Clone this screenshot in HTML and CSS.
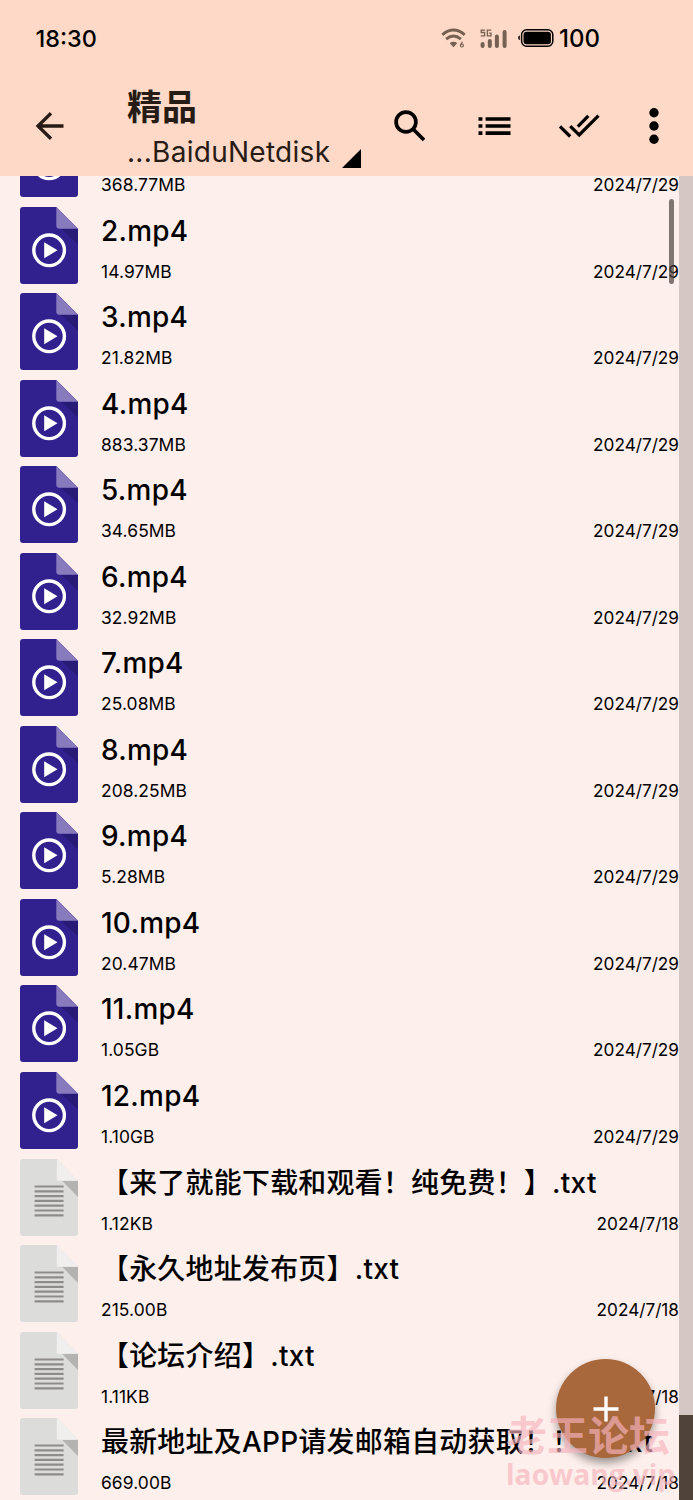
FILE: index.html
```html
<!DOCTYPE html>
<html lang="zh-CN">
    <head>
        <meta charset="UTF-8">
        <meta name="viewport" content="width=device-width, initial-scale=1.0">
        <title>精品</title>
        <link rel="stylesheet" href="styles.css">
    </head>

    <body>
        <!-- shared file icons -->
        <svg class="symbols">
            <symbol id="video" viewBox="0 0 58 77">
                <path d="M3 0H36.3L58 21.7V74a3 3 0 0 1-3 3H3a3 3 0 0 1-3-3V3a3 3 0 0 1 3-3z" fill="#30218f"/>
                <path d="M41 21.7H58V37.5z" fill="#281b78"/>
                <path d="M36.3 0L58 21.7H39.3a3 3 0 0 1-3-3z" fill="#887bbd"/>
                <circle cx="29.1" cy="43.3" r="15.3" fill="none" stroke="#fff" stroke-width="3.4"/>
                <path d="M24.2 35.3L37.5 43.3L24.2 51.3z" fill="#fff"/>
            </symbol>
            <symbol id="text" viewBox="0 0 58 77">
                <path d="M3 0H36.8L58 21.7V74a3 3 0 0 1-3 3H3a3 3 0 0 1-3-3V3a3 3 0 0 1 3-3z" fill="#dcdcdb"/>
                <path d="M42 21.7H58V38z" fill="#b4b3b2"/>
                <path d="M36.8 0L58 21.7H36.8z" fill="#f1efed"/>
                <path d="M14.6 27.5h29M14.6 32.3h29M14.6 37.1h29M14.6 41.9h29M14.6 46.7h29M14.6 51.5h29M14.6 56.3h29" stroke="#8e8c8b" stroke-width="2.2"/>
            </symbol>
        </svg>

        <div class="screen">
            <header class="header">
                <div class="status-bar">
                    <span class="time">18:30</span>
                    <svg class="wifi" width="26" height="22" viewBox="0 0 26 22" fill="none" stroke="#756052" stroke-width="2.9">
                        <path d="M1.3 6.8Q12.5-2.6 23.7 6.8"/>
                        <path d="M5.1 11.2Q12.5 5 19.9 11.2"/>
                        <path d="M8.7 15.3Q12.5 12.4 16.3 15.3L12.5 19.2z" fill="#756052" stroke="none"/>
                        <path d="M21.5 13.8L19.5 16.8" stroke-width="1.2"/>
                        <circle cx="20.9" cy="17.5" r="1.5" stroke-width="1.2"/>
                    </svg>
                    <svg class="signal" width="27" height="20" viewBox="0 0 27 20" fill="none" stroke="#756052">
                        <path d="M5.2 1.2H1.2V3.5H4.6V6.8H.8M11.3 1.2H7.4V6.8H11V4.2H9.2" stroke-width="1.3"/>
                        <path d="M2.6 15v2M9.8 11.9v5.1M16.9 7.6v9.4M24.6 3v14" stroke-width="4" stroke-linecap="round"/>
                    </svg>
                    <svg class="battery" width="36" height="19" viewBox="0 0 36 19">
                        <path d="M1.8 6.5Q.2 6.5 .2 8.8T1.8 11.1z" fill="#000"/>
                        <rect x="3.6" y=".8" width="31.2" height="16.4" rx="5" fill="none" stroke="#000" stroke-width="1.5"/>
                        <rect x="5.5" y="2.7" width="27.4" height="12.6" rx="3" fill="#000"/>
                    </svg>
                    <span class="percent">100</span>
                </div>

                <div class="toolbar">
                    <svg class="back" width="30" height="28" viewBox="0 0 30 28" fill="none" stroke="#271b15" stroke-width="3.3">
                        <path d="M16 1.2L3 14L16 26.8M2.5 14H28.5"/>
                    </svg>
                    <div class="heading">
                        <h1 class="title">精品</h1>
                        <div class="path">
                            <span>...BaiduNetdisk</span>
                            <svg width="19" height="19" viewBox="0 0 19 19"><path d="M19 0V19H0z"/></svg>
                        </div>
                    </div>
                    <div class="actions">
                        <svg width="32" height="32" viewBox="0 0 32 32" fill="none" stroke="#000" stroke-width="3.7">
                            <circle cx="12" cy="12" r="9.9"/>
                            <path d="M18.8 18.8L30 30"/>
                        </svg>
                        <svg class="view" width="33" height="20" viewBox="0 0 33 20" fill="none" stroke="#000" stroke-width="3.6">
                            <path d="M.5 3H4.4M.5 10H4.4M.5 17.1H4.4M7.6 3H32.5M7.6 10H32.5M7.6 17.1H32.5"/>
                        </svg>
                        <svg class="select-all" width="41" height="24" viewBox="0 0 41 24" fill="none" stroke="#000" stroke-width="3.2">
                            <path d="M1 12.5L11.2 22.5M11.2 12.2L20.2 21L39.5 1.7M18.8 12.7L29.3 1.9"/>
                        </svg>
                        <svg width="10" height="36" viewBox="0 0 10 36">
                            <circle cx="5" cy="4.8" r="4.7"/>
                            <circle cx="5" cy="18" r="4.7"/>
                            <circle cx="5" cy="31.2" r="4.7"/>
                        </svg>
                    </div>
                </div>
            </header>

            <main class="content">
                <div class="files">
                    <div class="file">
                        <svg class="icon"><use href="#video"/></svg>
                        <div class="info">
                            <p class="name">1.mp4</p>
                            <p class="meta"><span>368.77MB</span><span class="date">2024/7/29</span></p>
                        </div>
                    </div>
                    <div class="file">
                        <svg class="icon"><use href="#video"/></svg>
                        <div class="info">
                            <p class="name">2.mp4</p>
                            <p class="meta"><span>14.97MB</span><span class="date">2024/7/29</span></p>
                        </div>
                    </div>
                    <div class="file">
                        <svg class="icon"><use href="#video"/></svg>
                        <div class="info">
                            <p class="name">3.mp4</p>
                            <p class="meta"><span>21.82MB</span><span class="date">2024/7/29</span></p>
                        </div>
                    </div>
                    <div class="file">
                        <svg class="icon"><use href="#video"/></svg>
                        <div class="info">
                            <p class="name">4.mp4</p>
                            <p class="meta"><span>883.37MB</span><span class="date">2024/7/29</span></p>
                        </div>
                    </div>
                    <div class="file">
                        <svg class="icon"><use href="#video"/></svg>
                        <div class="info">
                            <p class="name">5.mp4</p>
                            <p class="meta"><span>34.65MB</span><span class="date">2024/7/29</span></p>
                        </div>
                    </div>
                    <div class="file">
                        <svg class="icon"><use href="#video"/></svg>
                        <div class="info">
                            <p class="name">6.mp4</p>
                            <p class="meta"><span>32.92MB</span><span class="date">2024/7/29</span></p>
                        </div>
                    </div>
                    <div class="file">
                        <svg class="icon"><use href="#video"/></svg>
                        <div class="info">
                            <p class="name">7.mp4</p>
                            <p class="meta"><span>25.08MB</span><span class="date">2024/7/29</span></p>
                        </div>
                    </div>
                    <div class="file">
                        <svg class="icon"><use href="#video"/></svg>
                        <div class="info">
                            <p class="name">8.mp4</p>
                            <p class="meta"><span>208.25MB</span><span class="date">2024/7/29</span></p>
                        </div>
                    </div>
                    <div class="file">
                        <svg class="icon"><use href="#video"/></svg>
                        <div class="info">
                            <p class="name">9.mp4</p>
                            <p class="meta"><span>5.28MB</span><span class="date">2024/7/29</span></p>
                        </div>
                    </div>
                    <div class="file">
                        <svg class="icon"><use href="#video"/></svg>
                        <div class="info">
                            <p class="name">10.mp4</p>
                            <p class="meta"><span>20.47MB</span><span class="date">2024/7/29</span></p>
                        </div>
                    </div>
                    <div class="file">
                        <svg class="icon"><use href="#video"/></svg>
                        <div class="info">
                            <p class="name">11.mp4</p>
                            <p class="meta"><span>1.05GB</span><span class="date">2024/7/29</span></p>
                        </div>
                    </div>
                    <div class="file">
                        <svg class="icon"><use href="#video"/></svg>
                        <div class="info">
                            <p class="name">12.mp4</p>
                            <p class="meta"><span>1.10GB</span><span class="date">2024/7/29</span></p>
                        </div>
                    </div>
                    <div class="file">
                        <svg class="icon"><use href="#text"/></svg>
                        <div class="info">
                            <p class="name">【来了就能下载和观看！纯免费！】.txt</p>
                            <p class="meta"><span>1.12KB</span><span class="date">2024/7/18</span></p>
                        </div>
                    </div>
                    <div class="file">
                        <svg class="icon"><use href="#text"/></svg>
                        <div class="info">
                            <p class="name">【永久地址发布页】.txt</p>
                            <p class="meta"><span>215.00B</span><span class="date">2024/7/18</span></p>
                        </div>
                    </div>
                    <div class="file">
                        <svg class="icon"><use href="#text"/></svg>
                        <div class="info">
                            <p class="name">【论坛介绍】.txt</p>
                            <p class="meta"><span>1.11KB</span><span class="date">2024/7/18</span></p>
                        </div>
                    </div>
                    <div class="file">
                        <svg class="icon"><use href="#text"/></svg>
                        <div class="info">
                            <p class="name">最新地址及APP请发邮箱自动获取！！！.txt</p>
                            <p class="meta"><span>669.00B</span><span class="date">2024/7/18</span></p>
                        </div>
                    </div>
                </div>
                <div class="next-panel">
                    <div class="next-panel-bar"></div>
                </div>
            </main>

            <div class="scrollbar"></div>
            <button class="add" type="button">
                <svg width="26" height="26" viewBox="0 0 26 26" stroke="#fff" stroke-width="3.4"><path d="M13 .5V25.5M.5 13H25.5"/></svg>
            </button>
            <div class="watermark">
                <span class="watermark-name">老王论坛</span>
                <span class="watermark-site">laowang.vip</span>
            </div>
        </div>
    </body>
</html>
```
FILE: styles.css
```css
* {
    box-sizing: border-box;
}

body {
    margin: 0;
    color: #000;
    font-family: Inter, 'Noto Sans CJK SC', sans-serif;
}

p, h1 {
    margin: 0;
}

svg {
    display: block;
    flex-shrink: 0;
}

.symbols {
    position: absolute;
    width: 0;
    height: 0;
}

.screen {
    position: relative;
    display: flex;
    flex-direction: column;
    width: 693px;
    height: 1500px;
    overflow: hidden;
    background-color: #fdefeb;
}

.header {
    height: 176px;
    background-color: #fed9c7;
}

.status-bar {
    display: flex;
    align-items: center;
    height: 77px;
    padding-left: 35.5px;
    font-size: 23.4px;
    font-weight: 500;
}

.time {
    width: 405.5px;
}

.wifi {
    margin-right: 13px;
}

.signal {
    margin-right: 11px;
}

.percent {
    margin-left: 5px;
    font-size: 24px;
}

.toolbar {
    display: flex;
    height: 99px;
    padding: 1px 0 0 35px;
    color: #271b15;
}

.back {
    margin-top: 34px;
}

.heading {
    width: 267px;
    margin-left: 62px;
}

.title {
    height: 58px;
    font-size: 35px;
    font-weight: 700;
    line-height: 58px;
}

.path {
    display: flex;
    align-items: flex-end;
    gap: 12px;
    height: 32px;
    font-size: 28px;
    letter-spacing: 0.28px;
    line-height: 32px;
    white-space: nowrap;
}

.path svg {
    fill: #000;
}

.actions {
    display: flex;
    align-items: center;
    justify-content: space-between;
    width: 265px;
    height: 96px;
}

.view {
    margin-left: 4px;
}

.select-all {
    margin-right: 1px;
}

.content {
    display: flex;
    flex: 1;
    min-height: 0;
    overflow: hidden;
}

.files {
    width: 679px;
    margin-top: -61px;
}

.file {
    display: flex;
    height: 86.55px;
    padding: 5px 0 0 20.4px;
}

.icon {
    width: 58px;
    height: 77px;
}

.info {
    flex: 1;
    margin-left: 22.6px;
}

.name {
    height: 48px;
    font-size: 27.9px;
    font-weight: 450;
    letter-spacing: 0.3px;
    line-height: 48px;
    white-space: nowrap;
}

.meta {
    display: flex;
    justify-content: space-between;
    height: 32px;
    font-size: 17.4px;
    letter-spacing: 0.1px;
    line-height: 34px;
}

.date {
    font-size: 17.2px;
    letter-spacing: 0;
}

.next-panel {
    display: flex;
    flex-direction: column;
    justify-content: flex-end;
    width: 14px;
    background-color: #d4c7c4;
}

.next-panel-bar {
    height: 85px;
    background-color: #50443a;
}

.scrollbar {
    position: absolute;
    top: 199px;
    right: 19px;
    width: 5px;
    height: 85px;
    border-radius: 3px;
    background-color: rgba(75, 65, 62, 0.7);
}

.add {
    position: absolute;
    top: 1359px;
    left: 556px;
    display: flex;
    align-items: center;
    justify-content: center;
    width: 99px;
    height: 99px;
    padding: 0;
    border: none;
    border-radius: 50%;
    background-color: #a8683c;
    box-shadow: 0 5px 9px rgba(0, 0, 0, 0.38);
}

.watermark {
    position: absolute;
    top: 1406px;
    left: 506px;
    display: flex;
    flex-direction: column;
    color: rgba(247, 180, 190, 0.66);
    font-weight: 700;
    white-space: nowrap;
}

.watermark-name {
    font-family: 'Noto Sans CJK SC', sans-serif;
    font-size: 41px;
    line-height: 54px;
}

.watermark-site {
    font-family: 'Open Sans', sans-serif;
    font-size: 28.2px;
    line-height: 28px;
}
```
